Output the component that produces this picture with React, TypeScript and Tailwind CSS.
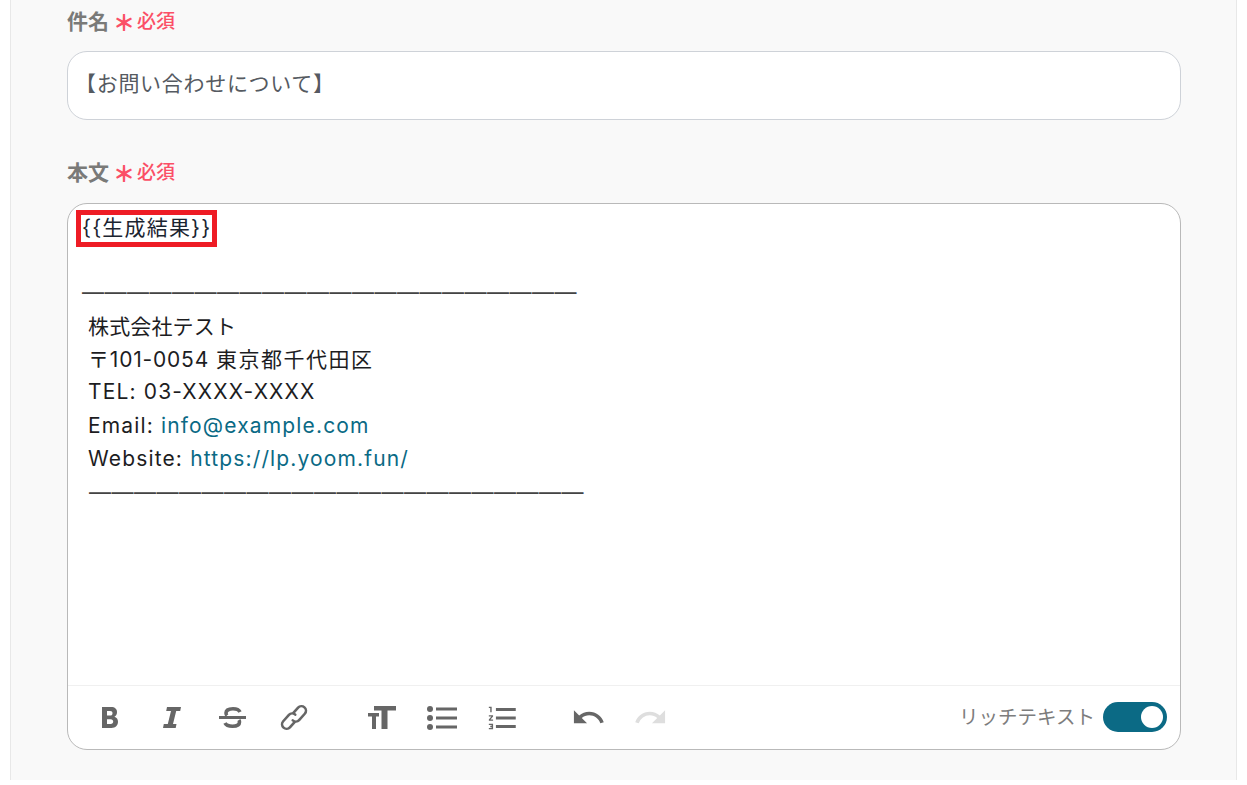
import { MdFormatListNumbered, MdRedo, MdUndo } from "react-icons/md";

const FONT = "[font-family:Inter,'Noto_Sans_CJK_JP',sans-serif]";
const DASHES = "—".repeat(22);

function Label({ text }: { text: string }) {
  return (
    <div className="flex items-center h-[30px]">
      <span className="text-[21px] leading-[30px] font-bold text-[#7a7a78]">{text}</span>
      <span className="text-[#fb4f66] text-[22px] leading-[30px] font-black ml-[4px] mt-[2px]">＊</span>
      <span className="text-[#fb4f66] text-[19px] leading-[30px] font-medium ml-[2px]">必須</span>
    </div>
  );
}

function BoldIcon() {
  return (
    <svg viewBox="0 0 16 21" className="w-[16px] h-[21px]" fill="#666">
      <path fillRule="evenodd" d="M0 0h9c4 0 6 2 6 5.300 0 2-1 3.700-2.600 4.500C14.700 10.500 16 12.300 16 14.800 16 18.500 13.500 21 9.500 21H0zM5 4v4.500h3.200c1.500 0 2.300-.9 2.300-2.300S9.700 4 8.200 4zm0 8.200V17h3.700c1.600 0 2.500-.9 2.500-2.400s-.9-2.400-2.500-2.400z" />
    </svg>
  );
}

function ItalicIcon() {
  return (
    <svg viewBox="0 0 18 21" className="w-[18px] h-[21px]" fill="#666">
      <path d="M4 0h14l-.8 4h-4L10 17h3.500l-.8 4H0l.8-4h4L8 4H3.200z" />
    </svg>
  );
}

function StrikeIcon() {
  return (
    <svg viewBox="0 0 27 21" className="w-[27px] h-[21px]" fill="none" stroke="#666">
      <path d="M0 10.500h27" strokeWidth="3" />
      <path d="M21 5C20 2.800 17.500 1.800 14 1.800 10 1.800 7 3.200 7 6c0 1 .4 1.800 1 2.500" strokeWidth="3.600" />
      <path d="M6 16c1 2.200 4 3.200 7.500 3.200 4 0 7-1.400 7-4.200 0-.8-.2-1.300-.6-1.900" strokeWidth="3.600" />
    </svg>
  );
}

function LinkIcon() {
  const half = "M16 12.500a4.500 4.500 0 0 0-4.500-4.500H3a4.500 4.500 0 0 0 0 9h7";
  return (
    <svg viewBox="0 0 26 27" className="w-[26px] h-[27px] overflow-visible" fill="none" stroke="#666" strokeWidth="2.600" strokeLinecap="round">
      <g transform="rotate(-48 13 13.500)">
        <path d={half} />
        <path d={half} transform="rotate(180 13 13.500)" />
      </g>
    </svg>
  );
}

function FontSizeIcon() {
  return (
    <svg viewBox="0 0 28 23" className="w-[28px] h-[23px]" fill="#666">
      <path d="M6 0h22v4.500h-8.500V23h-6V4.500H6z" />
      <path d="M0 7h11v3.500H8V23H4V10.500H0z" />
    </svg>
  );
}

function BulletIcon() {
  return (
    <svg viewBox="0 0 30 24" className="w-[30px] h-[24px]" fill="#666">
      <circle cx="3" cy="3" r="3" />
      <circle cx="3" cy="12" r="3" />
      <circle cx="3" cy="21" r="3" />
      <rect x="9" y="1.500" width="21" height="3" />
      <rect x="9" y="10.500" width="21" height="3" />
      <rect x="9" y="19.500" width="21" height="3" />
    </svg>
  );
}

export default function App() {
  return (
    <div className={`${FONT} h-[785px] overflow-hidden bg-white px-[10px]`}>
      <div className="h-[780px] bg-[#f9f9f9] border-x border-[#e8e8e8] pl-[56px] pr-[55px] pt-[7px]">
        <Label text="件名" />
        <div className="mt-[14px] h-[69px] rounded-[20px] border border-[#ced2d8] bg-white flex items-center pl-[7px] pb-[3px] text-[21px] text-[#555a61] tracking-[0.7px]">
          【お問い合わせについて】
        </div>

        <div className="mt-[38px]">
          <Label text="本文" />
        </div>

        <div className="mt-[15px] h-[547px] rounded-[20px] border border-[#b9b9b9] bg-white flex flex-col">
          <div className="flex-1 pt-[6px] text-[21px] leading-[32.750px] text-[#1d1d1f]">
            <div className="pl-[8px]">
              <span className="inline-block border-[5px] border-[#ee1c25] h-[37px] leading-[26px] pl-[1px] pr-[1px] text-[#1b2430] tracking-[1.2px]">
                {"{{生成結果}}"}
              </span>
            </div>
            <div className="pl-[14px] mt-[29px] text-[22px] text-[#444] whitespace-nowrap tracking-[0.5px]">{DASHES}</div>
            <div className="pl-[20px] mt-[2px] tracking-[1.150px]">
              <div className="tracking-[0.150px]">株式会社テスト</div>
              <div>
                <span className="tracking-[0.8px]">〒101-0054</span> <span className="tracking-[1.500px]">東京都千代田区</span>
              </div>
              <div>TEL: 03-XXXX-XXXX</div>
              <div className="pt-[1px]">
                Email: <a className="text-[#0a6a85]">info@example.com</a>
              </div>
              <div>
                Website: <a className="text-[#0a6a85]">https://lp.yoom.fun/</a>
              </div>
            </div>
            <div className="pl-[21px] text-[22px] text-[#444] whitespace-nowrap tracking-[0.5px]">{DASHES}</div>
          </div>

          <div className="h-[64px] border-t border-[#f0f0f0] flex items-center pl-[34px] pr-[13px] text-[#666]">
            <BoldIcon />
            <div className="ml-[45px]"><ItalicIcon /></div>
            <div className="ml-[38px]"><StrikeIcon /></div>
            <div className="ml-[35px] mb-[1px]"><LinkIcon /></div>
            <div className="ml-[61px]"><FontSizeIcon /></div>
            <div className="ml-[31px]"><BulletIcon /></div>
            <MdFormatListNumbered className="w-[34px] h-[34px] ml-[29px]" />
            <MdUndo className="w-[35px] h-[35px] ml-[51px]" />
            <MdRedo className="w-[35px] h-[35px] ml-[27px] text-[#dedede]" />
            <div className="ml-auto flex items-center gap-[8px]">
              <span className="text-[19.500px] text-[#7d7d7d] pt-[1px]">リッチテキスト</span>
              <div className="w-[64px] h-[30px] rounded-full bg-[#0b6a85] flex items-center justify-end pr-[4px] mb-[1px]">
                <div className="w-[22px] h-[22px] rounded-full bg-white" />
              </div>
            </div>
          </div>
        </div>
      </div>
    </div>
  );
}
